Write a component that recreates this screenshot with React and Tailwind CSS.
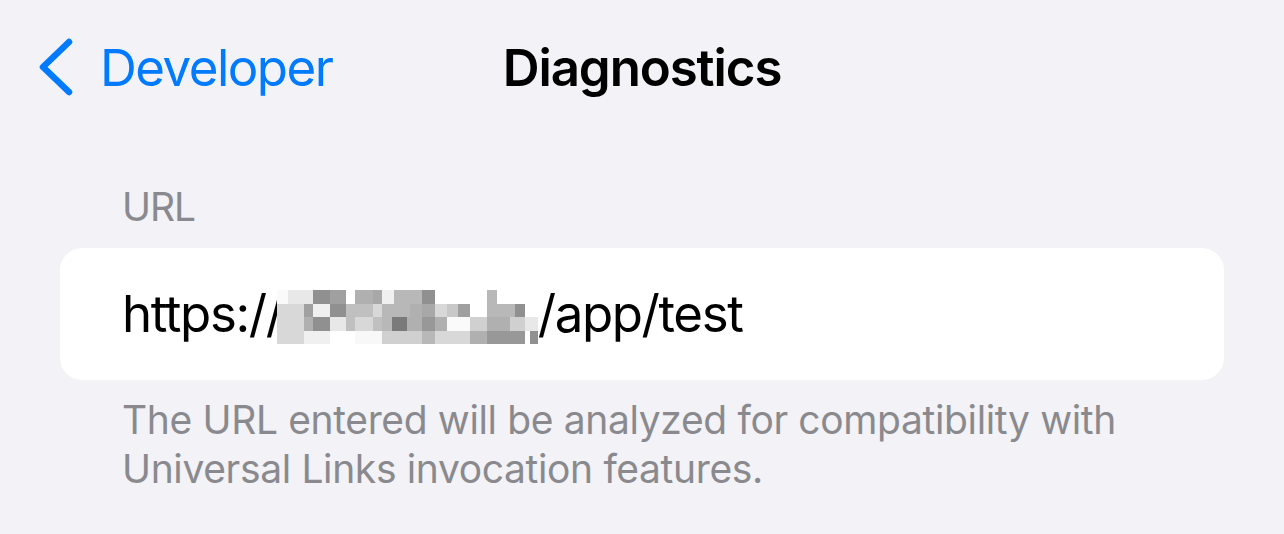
const MOSAIC = [
  // row 0
  [0, 0, 11, 14, '#fafafa'], [11, 0, 25, 14, '#e8e8e8'], [36, 0, 17, 14, '#909090'], [53, 0, 16, 14, '#a0a0a0'],
  [69, 0, 9, 14, '#ffffff'], [78, 0, 18, 14, '#b0b0b0'], [96, 0, 9, 14, '#a8a8a8'], [105, 0, 12, 14, '#f0f0f0'],
  [117, 0, 28, 14, '#b8b8b8'], [145, 0, 13, 14, '#909090'], [158, 0, 52, 14, '#ffffff'], [210, 0, 10, 14, '#b8b8b8'],
  [220, 0, 41, 14, '#ffffff'],
  // row 1
  [0, 14, 27, 13, '#d8d8d8'], [27, 14, 9, 13, '#a0a0a0'], [36, 14, 17, 13, '#f0f0f0'], [53, 14, 16, 13, '#909090'],
  [69, 14, 9, 13, '#c0c0c0'], [78, 14, 18, 13, '#c0c0c0'], [96, 14, 9, 13, '#d8d8d8'], [105, 14, 28, 13, '#b8b8b8'],
  [133, 14, 12, 13, '#b0b0b0'], [145, 14, 13, 13, '#a8a8a8'], [158, 14, 12, 13, '#d8d8d8'], [170, 14, 11, 13, '#c8c8c8'],
  [181, 14, 12, 13, '#a0a0a0'], [193, 14, 17, 13, '#ffffff'], [210, 14, 28, 13, '#b8b8b8'], [238, 14, 10, 13, '#909090'],
  [248, 14, 13, 13, '#ffffff'],
  // row 2
  [0, 27, 27, 14, '#d8d8d8'], [27, 27, 9, 14, '#b0b0b0'], [36, 27, 17, 14, '#909090'], [53, 27, 16, 14, '#e8e8e8'],
  [69, 27, 9, 14, '#c0c0c0'], [78, 27, 18, 14, '#d8d8d8'], [96, 27, 9, 14, '#c0c0c0'], [105, 27, 10, 14, '#b8b8b8'],
  [115, 27, 15, 14, '#7a7a7a'], [130, 27, 15, 14, '#b0b0b0'], [145, 27, 13, 14, '#989898'], [158, 27, 12, 14, '#b0b0b0'],
  [170, 27, 23, 14, '#fafafa'], [193, 27, 17, 14, '#d0d0d0'], [210, 27, 23, 14, '#b0b0b0'], [233, 27, 15, 14, '#d0d0d0'],
  [248, 27, 13, 14, '#e8e8e8'],
  // row 3
  [0, 41, 27, 13, '#d8d8d8'], [27, 41, 26, 13, '#f0f0f0'], [53, 41, 25, 13, '#ffffff'], [78, 41, 18, 13, '#f8f8f8'],
  [96, 41, 9, 13, '#f8f8f8'], [105, 41, 40, 13, '#d0d0d0'], [145, 41, 13, 13, '#b8b8b8'], [158, 41, 35, 13, '#d8d8d8'],
  [193, 41, 17, 13, '#b0b0b0'], [210, 41, 38, 13, '#989898'], [248, 41, 5, 13, '#ffffff'], [253, 41, 8, 13, '#909090'],
];

function Mosaic() {
  return (
    <svg width="261" height="54" viewBox="0 0 261 54" className="inline-block align-[-12px] -ml-[6px]" shapeRendering="crispEdges">
      {MOSAIC.map(([x, y, w, h, c], i) => (
        <rect key={i} x={x} y={y} width={w} height={h} fill={c} />
      ))}
    </svg>
  );
}

export default function App() {
  return (
    <div className="w-[1284px] h-[534px] bg-[#f2f2f7] font-['Inter',sans-serif] overflow-hidden">
      <div className="grid grid-cols-[1fr_auto_1fr] items-center h-[134px]">
        <div className="flex items-center gap-[27px] pl-[37px] text-[#007aff]">
          <svg width="36" height="58" viewBox="0 0 36 58" fill="none" stroke="currentColor" strokeWidth="6.5" strokeLinecap="round" strokeLinejoin="round">
            <polyline points="32,4 6,29 32,54" />
          </svg>
          <span className="text-[51px] leading-none tracking-[-1.5px]">Developer</span>
        </div>
        <h1 className="text-[51px] leading-none font-semibold text-black tracking-[-1.1px]">Diagnostics</h1>
        <div />
      </div>

      <div className="mt-[49px] pl-[122px] text-[39px] leading-[48px] text-[#8a8a8e] tracking-[-1px]">URL</div>

      <div className="mt-[17px] mx-[60px] h-[132px] bg-white rounded-[22px] flex items-center pl-[62px]">
        <span className="text-[51px] text-black whitespace-nowrap tracking-[-1.4px]">
          https://<Mosaic />/app/test
        </span>
      </div>

      <p className="mt-[15px] pl-[122px] w-[1160px] text-[39px] leading-[49px] text-[#8a8a8e] tracking-[-0.36px]">
        The URL entered will be analyzed for compatibility with Universal Links invocation features.
      </p>
    </div>
  );
}
